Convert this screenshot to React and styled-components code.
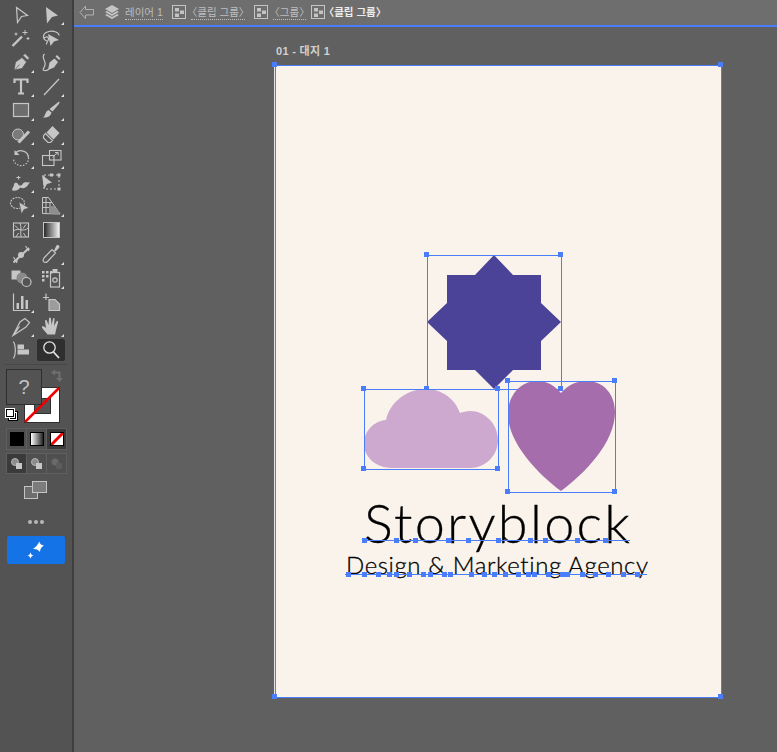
import React from 'react';
import styled, { createGlobalStyle } from 'styled-components';

const BLUE = '#4a7dfc';

const GlobalStyle = createGlobalStyle`
  html, body {
    margin: 0;
    padding: 0;
    background: #606060;
  }
  body {
    font-family: "Liberation Sans", "Noto Sans CJK KR", sans-serif;
  }
`;

// toolbar icons, all drawn in a 24x24 box
const icons = {
  select: <path d="M7.5 5.5 18.500 13.500 12.500 14.500 8.500 20.500Z" fill="none" strokeWidth="1.2" />,
  direct: <path d="M7 5 19 13.500 13 15 8 21.500Z" fill="currentColor" stroke="none" />,
  wand: (
    <>
      <path d="M3.5 20 13 10.5" fill="none" strokeWidth="2.4" />
      <path d="M16 4v5M13.5 6.5h5M7 6.5v3M5.5 8h3M19 11v3M17.5 12.5h3" fill="none" strokeWidth="1" />
    </>
  ),
  lasso: (
    <>
      <path d="M8 15C3 13 3 7 10 5.5 15 4.5 20 6.500 20 9.500" fill="none" strokeWidth="1.2" />
      <path d="M9 8 20 14 15 15.500 11.500 20Z" fill="currentColor" stroke="none" />
      <path d="M5.500 12.500C5 11 9 10 9.500 12.500S7 16 7.500 18.500" fill="none" strokeWidth="1.200" />
    </>
  ),
  pen: (
    <path
      d="M5 20 6.500 12 13 7.500 17.500 12 13 18.500ZM14 5.500 16 3.500 20.500 8 18.500 10ZM6 19.500 10.500 14.500"
      fill="currentColor"
      stroke="#535353"
      strokeWidth=".7"
    />
  ),
  curve: (
    <>
      <path d="M9 20 10.500 12.500 15.500 8.500 19 12 15 17.500ZM16.500 6.500 18 5 21.500 8.500 20 10Z" fill="currentColor" stroke="none" />
      <path d="M5.500 4C1.500 8 7.500 10.500 6 15S3 20 5.500 20.500 9 20 10 19" fill="none" strokeWidth="1.200" />
    </>
  ),
  type: <path d="M5.500 9V5.500h13V9M12 5.500v14M9 19.500h6" fill="none" strokeWidth="2.200" />,
  line: <path d="M5 21 20 5" fill="none" strokeWidth="1.200" />,
  rect: <rect x="4.500" y="5.500" width="15" height="13" fill="#6d6d6d" strokeWidth="1.200" />,
  brush: (
    <path
      d="M20 3.500C21 4 20.500 5 19.500 6.500L13.500 13.500 10.500 11ZM9.500 12 12.500 14.500C12 18 8.500 20 4 19.500 6.500 18 6 13.500 9.500 12Z"
      fill="currentColor"
      stroke="none"
    />
  ),
  shaper: (
    <>
      <circle cx="9" cy="12.500" r="5.500" fill="#7a7a7a" strokeWidth="1" />
      <path d="M9.500 20.500 20 9.500" fill="none" strokeWidth="3" />
    </>
  ),
  eraser: (
    <>
      <path d="M13.500 4 20.500 11 14.500 17.500 7.500 10.500Z" fill="currentColor" stroke="none" />
      <path d="M6.500 11.500 13.500 18.500 11.500 20.500H9L4.500 16V14Z" fill="none" strokeWidth="1.200" />
    </>
  ),
  rotate: (
    <>
      <path d="M7 6.500C10 3.500 19 4 19.500 11.500" fill="none" strokeWidth="1.300" />
      <path d="M5.500 4V9H10.500Z" fill="currentColor" stroke="none" />
      <path d="M19.500 11.500C20 17 15 20.500 10.500 19.500S4.500 15 4.500 12.500" fill="none" strokeWidth="1.200" strokeDasharray="1.500 1.500" />
    </>
  ),
  scale: (
    <>
      <rect x="10.500" y="4.500" width="11.500" height="9.500" fill="none" strokeWidth="1.100" />
      <rect x="3.500" y="9.500" width="11.500" height="10" fill="none" strokeWidth="1.100" />
      <path d="M13.500 11 19 6.500M16 6.500h3.200v3" fill="none" strokeWidth="1" />
    </>
  ),
  warp: (
    <>
      <path d="M3.500 20.500C2.500 18 5 17 5 14.500 5 12.500 8 12 9 14 10 16 12.500 16 13.500 14 14.500 12 17 12 19 12.500L21 12 19 15C17.500 18 13.500 19 11.500 17.500 9.500 20 6 21.500 3.500 20.500Z" fill="currentColor" stroke="none" />
      <path d="M9.500 6v3.500M7.500 7.500h4" fill="none" strokeWidth="1" />
    </>
  ),
  free: (
    <>
      <path d="M3 5 13 12.500 8 14 5 19Z" fill="currentColor" stroke="none" />
      <rect x="5" y="5" width="15" height="14" fill="none" strokeWidth="1" strokeDasharray="2 2" />
      <path d="M18.500 3.500h3v3h-3ZM18.500 17.500h3v3h-3ZM11 3.500h3v3h-3Z" fill="currentColor" stroke="none" />
    </>
  ),
  builder: (
    <>
      <ellipse cx="8.500" cy="9" rx="7" ry="5.500" fill="none" strokeWidth="1.100" strokeDasharray="2 1" />
      <path d="M10 8 20 14 15 15.500 12.500 20Z" fill="currentColor" stroke="#535353" strokeWidth=".6" />
    </>
  ),
  perspective: (
    <>
      <path d="M3.500 3.500V19.500L21 20 9.500 3.500ZM3.500 8.500 13 8.500M3.500 13.500 16.500 13.500M7 3.500V19.500M11 8V19.500" fill="none" strokeWidth="1" />
      <path d="M10 12 15 12 21.500 19.500H10Z" fill="#8e8e8e" stroke="none" />
    </>
  ),
  mesh: (
    <>
      <rect x="4.500" y="5" width="15" height="14" fill="none" strokeWidth="1.100" />
      <path d="M12 19C11 14 13 9 11 5M4.500 13C9 9 15 15 19.500 9.500M6 7.500 9.500 11M17 6.500 14 10.500M7 19 9.500 15M17 19 14.500 15" fill="none" strokeWidth="1" />
    </>
  ),
  blend: (
    <>
      <path d="M4.500 20.500 20 6" fill="none" strokeWidth="2" />
      <circle cx="12" cy="13" r="3" fill="currentColor" stroke="none" />
      <path d="M4.500 15 8 21M5 19h4M16.500 4 20 9M17 7.500h3.500" fill="none" strokeWidth="1.100" />
    </>
  ),
  dropper: (
    <>
      <path d="M6 20.500C4 20 3.500 18 5 16L13 7.500 16.500 11 8.500 19.500C7.500 20.500 7 20.500 6 20.500Z" fill="none" strokeWidth="1.200" />
      <path d="M13 7 15 8.500 17.500 3.500C19 2 21.500 4.500 20 6L16.500 9.500Z" fill="currentColor" stroke="none" />
    </>
  ),
  livepaint: (
    <>
      <rect x="2.500" y="4.500" width="9" height="9" fill="currentColor" stroke="none" />
      <circle cx="13" cy="12" r="5.500" fill="#8a8a8a" stroke="none" />
      <circle cx="17.500" cy="16" r="4.500" fill="#535353" strokeWidth="1.200" />
    </>
  ),
  symbol: (
    <>
      <path d="M3 5h2.500v2.500H3ZM7 5h2.500v2.500H7ZM3 9h2.500v2.500H3ZM7 9h2.500v2.500H7ZM3 13h2.500v2.500H3ZM11 5h2.500v2.500H11Z" fill="currentColor" stroke="none" />
      <path d="M13.500 3h5v3h-5Z" fill="currentColor" stroke="none" />
      <rect x="11.500" y="6.500" width="9" height="14.500" fill="none" strokeWidth="1.200" />
      <circle cx="16" cy="14" r="2.200" fill="none" strokeWidth="1.200" />
    </>
  ),
  graph: (
    <>
      <path d="M4.500 3.500V20.500H21" fill="none" strokeWidth="1.200" />
      <path d="M7.500 13h2.500v6H7.500ZM12 6h2.500v13H12ZM16.500 10H19v9h-2.500Z" fill="currentColor" stroke="none" />
    </>
  ),
  artboard: (
    <>
      <path d="M4 7.500H10M7 3.500V10" fill="none" strokeWidth="1.200" />
      <path d="M10 9.500H16L20.500 14V20.500H10Z" fill="#9c9c9c" strokeWidth="1.200" />
    </>
  ),
  slice: (
    <path d="M4 21.500 11 8 16 4.500 20.500 8.500 17 13ZM5 20.500 10.500 12.500" fill="none" strokeWidth="1.200" />
  ),
  hand: (
    <path
      d="M8.500 20.500C7 18 3.500 15.500 3 13.500S5 12 7 14L6 7C6 5.500 7.500 5.500 8 7L9.500 11 10 4.500C10 3 11.500 3 12 4.500L12.500 11 14 5C14.500 3.500 16 4 15.500 5.500L15 12 17.500 7.500C18.500 6.500 19.500 7.500 19 8.500L17 16C16.500 18 16.500 19 16 20.500Z"
      fill="currentColor"
      stroke="none"
    />
  ),
  flag: (
    <>
      <path d="M4.500 3.500C7 8 7 16 4.500 20.500" fill="none" strokeWidth="1.200" />
      <path d="M8.500 6.500H15V11H8.500ZM8.500 11.500H20V16.500H8.500Z" fill="currentColor" stroke="none" />
    </>
  ),
  zoom: (
    <>
      <circle cx="10.500" cy="9.500" r="5.700" fill="none" strokeWidth="1.300" />
      <path d="M14.500 14 20 20" fill="none" strokeWidth="1.800" />
    </>
  ),
};

const tools = [
  ['select', false], ['direct', true],
  ['wand', false], ['lasso', false],
  ['pen', true], ['curve', true],
  ['type', true], ['line', true],
  ['rect', true], ['brush', true],
  ['shaper', true], ['eraser', true],
  ['rotate', true], ['scale', true],
  ['warp', true], ['free', false],
  ['builder', true], ['perspective', true],
  ['mesh', false], ['gradient', false],
  ['blend', false], ['dropper', true],
  ['livepaint', false], ['symbol', true],
  ['graph', true], ['artboard', false],
  ['slice', true], ['hand', true],
  ['flag', false], ['zoom', false],
];

// x offsets of the anchor points along each baseline, page coords
const titleAnchors = [364, 396, 415, 448, 468, 498, 530, 545, 577, 605];
const taglineAnchors = [
  348, 364, 378, 389, 396, 409, 423, 430, 444, 450, 471, 484, 494,
  505, 518, 528, 534, 548, 562, 567, 582, 595, 608, 623, 637,
];

// artboard padding box starts here on the page
const ORIGIN_X = 276;
const ORIGIN_Y = 66;

function Tool({ name, flyout }) {
  return (
    <ToolCell $active={name === 'zoom'} $flyout={flyout}>
      {name === 'gradient' ? (
        <GradientSwatch />
      ) : (
        <ToolIcon viewBox="0 0 24 24" stroke="currentColor">
          {icons[name]}
        </ToolIcon>
      )}
    </ToolCell>
  );
}

function GroupIcon() {
  return (
    <svg width="15" height="15" viewBox="0 0 15 15">
      <rect x=".5" y=".5" width="13" height="13" fill="none" stroke="#c4c4c4" />
      <path d="M3 3h4v3.500H3ZM8 5.500h4v3.500H8ZM3 8.500h4V12H3Z" fill="#c4c4c4" />
    </svg>
  );
}

// the 〈 〉 glyphs are full width in the CJK font, the reference sets them tight
function GroupName({ children, ...rest }) {
  return (
    <Crumb {...rest}>
      <OpenBracket>〈</OpenBracket>
      {children}
      <CloseBracket>〉</CloseBracket>
    </Crumb>
  );
}

function Selection({ x, y, w, h, children }) {
  return (
    <SelectionBox $x={x - ORIGIN_X} $y={y - ORIGIN_Y} $w={w} $h={h}>
      {children}
      <Handle $x={-3} $y={-3} />
      <Handle $x={w - 3} $y={-3} />
      <Handle $x={-3} $y={h - 3} />
      <Handle $x={w - 3} $y={h - 3} />
    </SelectionBox>
  );
}

function Baseline({ x, y, w, anchors }) {
  return (
    <BaselineRule $x={x - ORIGIN_X} $y={y - ORIGIN_Y} $w={w}>
      {anchors.map((a) => (
        <Handle key={a} $x={a - x - 2.5} $y={-2} />
      ))}
    </BaselineRule>
  );
}

export default function App() {
  return (
    <>
      <GlobalStyle />
      <Page>
        <Sidebar>
          <ToolGrid>
            {tools.map(([name, flyout]) => (
              <Tool key={name} name={name} flyout={flyout} />
            ))}
          </ToolGrid>
          <Divider />
          <Wells>
            <StrokeWell>
              <StrokeHole />
              <svg width="36" height="36" viewBox="0 0 36 36">
                <path d="M1 35 35 1" stroke="#f00000" strokeWidth="2.500" />
              </svg>
            </StrokeWell>
            <FillWell>?</FillWell>
            <SwapIcon width="14" height="14" viewBox="0 0 14 14">
              <path d="M1 3.500 5 .5V2.500H10.500V9H13L9.500 13 6 9H8.500V4.500H5V6.500Z" fill="#6f6f6f" />
            </SwapIcon>
            <DefaultSwatch>
              <span />
              <span />
            </DefaultSwatch>
          </Wells>
          <ButtonRow>
            <ModeButton>
              <BlackChip />
            </ModeButton>
            <ModeButton>
              <GradientChip />
            </ModeButton>
            <ModeButton $active>
              <NoneChip>
                <svg width="12" height="12" viewBox="0 0 12 12">
                  <path d="M0 12 12 0" stroke="#f00000" strokeWidth="3" />
                </svg>
              </NoneChip>
            </ModeButton>
          </ButtonRow>
          <ButtonRow $tight>
            <ModeButton $active>
              <DrawIcon />
            </ModeButton>
            <ModeButton>
              <DrawIcon />
            </ModeButton>
            <ModeButton>
              <DrawIcon $dim />
            </ModeButton>
          </ButtonRow>
          <ScreenMode width="24" height="18" viewBox="0 0 24 18">
            <rect x=".5" y="5.500" width="13" height="12" fill="#6e6e6e" stroke="#c4c4c4" />
            <rect x="8.500" y=".5" width="14" height="11" fill="#7c7c7c" stroke="#c4c4c4" />
          </ScreenMode>
          <Dots>
            <i />
            <i />
            <i />
          </Dots>
          <Sparkle>
            <svg width="20" height="20" viewBox="0 0 20 20">
              <path d="M13.500 1.500Q13.700 5 18 5.500 14 7.500 14 12 11.500 8.500 7 9 11 6.500 13.500 1.500ZM4.500 12.500Q5 15 7.500 15.500 5 16 4.500 18.500 4 16 1.500 15.500 4 15 4.500 12.500Z" fill="#fff" />
            </svg>
          </Sparkle>
        </Sidebar>
        <Main>
          <TopBar>
            <svg width="16" height="15" viewBox="0 0 16 15">
              <path d="M6.500 1 1 7.500 6.500 13.500V10H14.500V4.500H6.500Z" fill="none" stroke="#b0b0b0" />
            </svg>
            <LayersIcon width="16" height="15" viewBox="0 0 16 15">
              <path d="M8 0 15 4 8 8 1 4ZM1 7 3 6 8 9 13 6 15 7 8 11ZM1 10 3 9 8 12 13 9 15 10 8 14Z" fill="#c4c4c4" />
            </LayersIcon>
            <Crumb $dotted>레이어 1</Crumb>
            <CrumbGroup>
              <GroupIcon />
              <GroupName $dotted>클립 그룹</GroupName>
            </CrumbGroup>
            <CrumbGroup>
              <GroupIcon />
              <GroupName $dotted>그룹</GroupName>
            </CrumbGroup>
            <CrumbGroup $near>
              <GroupIcon />
              <GroupName $current>클립 그룹</GroupName>
            </CrumbGroup>
          </TopBar>
          <Canvas>
            <BoardLabel>01 - 대지 1</BoardLabel>
            <Artboard>
              <Handle $x={-4} $y={-4} />
              <Handle $x={442} $y={-4} />
              <Handle $x={-4} $y={628} />
              <Handle $x={442} $y={628} />

              <Selection x={427} y={255} w={134} h={134}>
                <svg width="134" height="134" viewBox="0 0 134 134">
                  <path
                    d="M67 0 86 20H114V48L134 67 114 86V115H86L67 134 48 115H20V86L0 67 20 48V20H48Z"
                    fill="#4a4397"
                  />
                </svg>
              </Selection>
              <Selection x={364} y={389} w={134} h={80}>
                <svg width="134" height="80" viewBox="0 0 134 80">
                  <path
                    d="M28 79C12 79 0 68 0 55 0 42 10 32 22 31 26 13 43 0 62 0 78 0 91 10 96 24 99 23 102 22 106 22 121 22 134 35 134 51 134 66 122 79 106 79Z"
                    fill="#cda8cf"
                  />
                </svg>
              </Selection>
              <Selection x={508} y={381} w={107} h={111}>
                <svg width="107" height="111" viewBox="0 0 107 111">
                  <path
                    d="M53 12C46 4 39 0 29 0 12 0 0 15 0 33 0 62 30 93 53 110 76 93 107 62 107 31 107 14 96 0 79 0 68 0 60 4 53 12Z"
                    fill="#a56dab"
                  />
                </svg>
              </Selection>

              <Title>Storyblock</Title>
              <Tagline>Design &amp; Marketing Agency</Tagline>
              <Baseline x={363} y={540} w={267} anchors={titleAnchors} />
              <Baseline x={345} y={574} w={302} anchors={taglineAnchors} />
            </Artboard>
          </Canvas>
        </Main>
      </Page>
    </>
  );
}

const Page = styled.div`
  display: flex;
  width: 777px;
  height: 752px;
  overflow: hidden;
`;

const Sidebar = styled.aside`
  flex: 0 0 74px;
  box-sizing: border-box;
  height: 100%;
  padding: 2px 6px 0;
  background: #535353;
  border-right: 2px solid #3f3f3f;
  display: flex;
  flex-direction: column;
  align-items: stretch;
`;

const ToolGrid = styled.div`
  display: grid;
  grid-template-columns: 30px 30px;
  grid-auto-rows: 24px;
`;

const ToolCell = styled.div`
  position: relative;
  display: flex;
  align-items: center;
  justify-content: center;
  color: #c6c6c6;
  ${(p) => p.$active && `
    background: #2f2f2f;
    border-radius: 2px;
    margin: 1px;
    color: #e4e4e4;
  `}
  ${(p) => p.$flyout && `
    &::after {
      content: "";
      position: absolute;
      right: 2px;
      bottom: 1px;
      border-left: 3px solid transparent;
      border-bottom: 3px solid #e0e0e0;
    }
  `}
`;

const ToolIcon = styled.svg`
  width: 24px;
  height: 24px;
`;

const GradientSwatch = styled.div`
  width: 15px;
  height: 14px;
  border: 1px solid #c6c6c6;
  background: linear-gradient(90deg, #2a2a2a, #f0f0f0);
`;

const Divider = styled.div`
  height: 1px;
  margin: 2px -1px 4px;
  background: #484848;
`;

const Wells = styled.div`
  position: relative;
  height: 56px;
`;

const FillWell = styled.div`
  position: absolute;
  left: 0;
  top: 0;
  box-sizing: border-box;
  width: 36px;
  height: 36px;
  background: #535353;
  border: 1px solid #2f2f2f;
  display: flex;
  align-items: center;
  justify-content: center;
  color: #c4c4c4;
  font-size: 20px;
`;

const StrokeWell = styled.div`
  position: absolute;
  left: 18px;
  top: 18px;
  box-sizing: border-box;
  width: 36px;
  height: 36px;
  background: #fff;
  border: 1px solid #2f2f2f;

  svg {
    position: absolute;
    left: -1px;
    top: -1px;
  }
`;

const StrokeHole = styled.div`
  position: absolute;
  left: 9px;
  top: 10px;
  width: 15px;
  height: 14px;
  background: #535353;
  border: 1px solid #2f2f2f;
`;

const SwapIcon = styled.svg`
  position: absolute;
  left: 44px;
  top: 0;
`;

const DefaultSwatch = styled.div`
  position: absolute;
  left: 0;
  top: 40px;
  width: 12px;
  height: 12px;

  span {
    position: absolute;
    box-sizing: border-box;
    width: 8px;
    height: 8px;
    border: 1px solid #fff;
    outline: 1px solid #000;
    background: #000;
  }
  span:first-child {
    left: 3px;
    top: 3px;
  }
  span:last-child {
    left: 0;
    top: 0;
    background: #fff;
    border-color: #000;
    outline-color: #fff;
  }
`;

const ButtonRow = styled.div`
  display: grid;
  grid-template-columns: repeat(3, 19px);
  gap: 1px;
  height: ${(p) => (p.$tight ? '19px' : '20px')};
  margin: ${(p) => (p.$tight ? '5px 0 0 1px' : '4px 0 0 1px')};
  background: #5f5f5f;
  outline: 1px solid #5f5f5f;
`;

const ModeButton = styled.div`
  display: flex;
  align-items: center;
  justify-content: center;
  background: ${(p) => (p.$active ? '#3a3a3a' : '#4f4f4f')};
`;

const BlackChip = styled.div`
  width: 14px;
  height: 14px;
  background: #000;
`;

const GradientChip = styled.div`
  box-sizing: border-box;
  width: 14px;
  height: 14px;
  border: 1px solid #000;
  background: linear-gradient(90deg, #fff, #222);
`;

const NoneChip = styled.div`
  box-sizing: border-box;
  width: 12px;
  height: 12px;
  background: #fff;
  line-height: 0;
  outline: 1px solid #000;
`;

const DrawIcon = styled.div`
  position: relative;
  box-sizing: border-box;
  width: 8px;
  height: 8px;
  margin: -3px 0 0 -3px;
  border-radius: 50%;
  background: ${(p) => (p.$dim ? '#6a6a6a' : '#8c8c8c')};
  border: 1px solid ${(p) => (p.$dim ? '#5e5e5e' : '#b4b4b4')};
  &::after {
    content: "";
    position: absolute;
    right: -4px;
    bottom: -4px;
    width: 6px;
    height: 6px;
    background: ${(p) => (p.$dim ? '#5c5c5c' : '#c6c6c6')};
  }
`;

const ScreenMode = styled.svg`
  align-self: center;
  margin-top: 8px;
`;

const Dots = styled.div`
  display: flex;
  justify-content: center;
  gap: 2px;
  margin-top: 21px;

  i {
    width: 4px;
    height: 4px;
    border-radius: 50%;
    background: #b8b8b8;
  }
`;

const Sparkle = styled.div`
  margin: 12px 1px 0;
  height: 28px;
  border-radius: 2px;
  background: #1473e6;
  display: flex;
  align-items: center;
  justify-content: center;
`;

const Main = styled.main`
  flex: 1;
  display: flex;
  flex-direction: column;
  min-width: 0;
`;

const TopBar = styled.div`
  flex: 0 0 25px;
  display: flex;
  align-items: center;
  padding-left: 5px;
  background: #6e6e6e;
  border-bottom: 2px solid ${BLUE};
`;

const LayersIcon = styled.svg`
  margin: 0 5px 0 9px;
`;

const CrumbGroup = styled.div`
  display: flex;
  align-items: center;
  gap: ${(p) => (p.$near ? '2px' : '4px')};
  margin-left: ${(p) => (p.$near ? '5px' : '9px')};
`;

const Crumb = styled.span`
  font-size: 10.5px;
  line-height: 13px;
  white-space: nowrap;
  color: ${(p) => (p.$current ? '#ececec' : '#bebebe')};
  font-weight: ${(p) => (p.$current ? 700 : 400)};
  ${(p) => p.$dotted && 'border-bottom: 1px dotted #bebebe;'}
`;

const OpenBracket = styled.span`
  margin-left: -4px;
`;

const CloseBracket = styled.span`
  margin-right: -4px;
`;

const Canvas = styled.div`
  flex: 1;
  box-sizing: border-box;
  padding: 16px 0 0 201px;
  background: #606060;
`;

const BoardLabel = styled.div`
  height: 22px;
  padding-left: 1px;
  font-size: 11px;
  line-height: 17px;
  font-weight: 700;
  letter-spacing: .3px;
  color: #d0d0d0;
`;

const Artboard = styled.div`
  position: relative;
  box-sizing: border-box;
  width: 447px;
  height: 633px;
  background: #faf3ec;
  border: 1px solid ${BLUE};
  box-shadow: -1px 0 0 #e4e4e4;
`;

const Handle = styled.div`
  position: absolute;
  left: ${(p) => p.$x}px;
  top: ${(p) => p.$y}px;
  width: 5px;
  height: 5px;
  background: ${BLUE};
`;

const SelectionBox = styled.div`
  position: absolute;
  left: ${(p) => p.$x}px;
  top: ${(p) => p.$y}px;
  width: ${(p) => p.$w}px;
  height: ${(p) => p.$h}px;

  svg {
    display: block;
  }
  &::before {
    content: "";
    position: absolute;
    inset: 0 -1px -1px 0;
    border: 1px solid ${BLUE};
  }
`;

const Title = styled.div`
  position: absolute;
  left: 88px;
  top: 424px;
  font-family: Lato, sans-serif;
  font-weight: 300;
  font-size: 54px;
  line-height: 66px;
  letter-spacing: 2.3px;
  white-space: nowrap;
  color: #000;
  -webkit-text-stroke: .3px #000;
`;

const Tagline = styled.div`
  position: absolute;
  left: 70px;
  top: 484px;
  font-family: Lato, sans-serif;
  font-weight: 300;
  font-size: 24px;
  line-height: 30px;
  letter-spacing: .6px;
  white-space: nowrap;
  color: #000;
  -webkit-text-stroke: .3px #000;
`;

const BaselineRule = styled.div`
  position: absolute;
  left: ${(p) => p.$x}px;
  top: ${(p) => p.$y}px;
  width: ${(p) => p.$w}px;
  height: 1px;
  background: ${BLUE};
`;
